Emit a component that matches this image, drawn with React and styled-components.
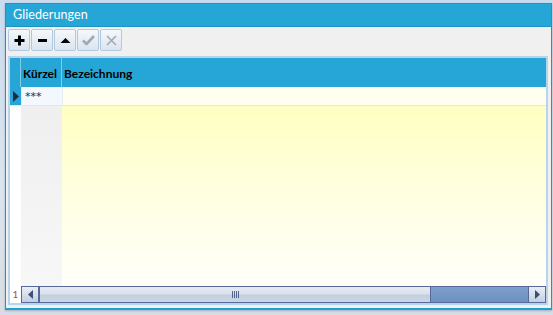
import styled, { createGlobalStyle } from "styled-components";

const GlobalStyle = createGlobalStyle`
  html, body {
    margin: 0;
    padding: 0;
    background: linear-gradient(180deg, #c9dbee 0%, #dbe5ef 60%, #d9dde3 100%);
    font-family: Lato, "Noto Sans", "DejaVu Sans", sans-serif;
  }
  #root {
    width: 553px;
    height: 315px;
    padding: 3px 2px 0 5px;
    box-sizing: border-box;
  }
`;

const Window = styled.div`
  width: 547px;
  height: 307px;
  box-sizing: border-box;
  border: 1px solid #1b97c7;
  border-bottom: 2px solid #1ea0d0;
  background: #f0f0f0;
  display: flex;
  flex-direction: column;
  box-shadow: 0 1px 2px rgba(60, 90, 120, 0.35);
`;

const TitleBar = styled.div`
  height: 22px;
  flex: none;
  background: #26a6d6;
  border-bottom: 1px solid #1c94c4;
  color: #fff;
  font-size: 12.5px;
  line-height: 22px;
  padding-left: 7px;
  letter-spacing: 0.1px;
`;

const Toolbar = styled.div`
  height: 29px;
  flex: none;
  display: flex;
  gap: 1px;
  padding: 2px 0 0 2px;
  box-sizing: border-box;
`;

const ToolButton = styled.button`
  width: 22px;
  height: 22px;
  padding: 0;
  margin: 0;
  border: 1px solid #b4c8de;
  border-radius: 2px;
  background: linear-gradient(180deg, #f6f9fc 0%, #e7eef6 50%, #dbe5f0 100%);
  display: flex;
  align-items: center;
  justify-content: center;
  color: ${(p) => (p.$disabled ? "#a4a9ae" : "#000")};
`;

const Grid = styled.div`
  flex: 1;
  margin: 0 3px 3px 2px;
  border: 2px solid #b6d4ec;
  display: flex;
  flex-direction: column;
  background: #fff;
`;

const HeaderRow = styled.div`
  height: 29px;
  flex: none;
  display: flex;
  background: #26a6d6;
`;

const HeaderCell = styled.div`
  width: ${(p) => p.$w || "auto"};
  flex: ${(p) => (p.$w ? "none" : 1)};
  border-right: ${(p) => (p.$w ? "1px solid #7fcbe8" : "none")};
  font-size: 12px;
  font-weight: 700;
  color: #000;
  display: flex;
  align-items: center;
  padding: 2px 0 0 2px;
  box-sizing: border-box;
`;

const DataRow = styled.div`
  height: 19px;
  flex: none;
  display: flex;
  border-bottom: 1px solid #dce8f3;
  box-sizing: border-box;
`;

const IndicatorCell = styled.div`
  width: 11px;
  flex: none;
  background: ${(p) => (p.$active ? "#26a6d6" : "#fff")};
  display: flex;
  align-items: center;
  justify-content: center;
  border-right: 1px solid #e2ecf5;
`;

const Cell = styled.div`
  width: ${(p) => p.$w || "auto"};
  flex: ${(p) => (p.$w ? "none" : 1)};
  background: ${(p) => p.$bg};
  border-right: ${(p) => (p.$w ? "1px solid #e2ecf5" : "none")};
  font-family: "DejaVu Sans", sans-serif;
  font-size: 11px;
  line-height: 20px;
  padding-left: 3px;
  box-sizing: border-box;
  color: #1c2a55;
`;

const EmptyArea = styled.div`
  flex: 1;
  display: flex;
`;

const EmptyColumn = styled.div`
  width: ${(p) => p.$w || "auto"};
  flex: ${(p) => (p.$w ? "none" : 1)};
  background: ${(p) => p.$bg};
`;

const FooterRow = styled.div`
  height: 17px;
  flex: none;
  display: flex;
`;

const CountCell = styled.div`
  width: 11px;
  font-size: 10px;
  line-height: 17px;
  color: #b05a10;
  text-align: center;
  background: #fff;
`;

const ScrollBar = styled.div`
  flex: 1;
  display: flex;
  background: linear-gradient(180deg, #7d9fcb 0%, #6d91c0 100%);
  border-top: 1px solid #56699a;
  border-bottom: 1px solid #56699a;
`;

const ArrowButton = styled.div`
  width: 16px;
  flex: none;
  border-left: 1px solid #56699a;
  border-right: 1px solid #56699a;
  background: linear-gradient(180deg, #e9eef5 0%, #d6dfea 50%, #c4d0df 100%);
  display: flex;
  align-items: center;
  justify-content: center;
`;

const Thumb = styled.div`
  width: 390px;
  flex: none;
  border-right: 1px solid #56699a;
  border-left: 1px solid #56699a;
  background: linear-gradient(180deg, #e6ebf2 0%, #dae2ec 45%, #c3cfde 55%, #ccd6e3 100%);
  display: flex;
  align-items: center;
  justify-content: center;
  gap: 1px;
`;

const Grip = styled.span`
  width: 1px;
  height: 7px;
  background: #52638c;
`;

const Track = styled.div`
  flex: 1;
`;

const PlusIcon = () => (
  <svg width="11" height="11" viewBox="0 0 11 11">
    <rect x="4" y="0.5" width="3" height="10" fill="currentColor" />
    <rect x="0.5" y="4" width="10" height="3" fill="currentColor" />
  </svg>
);

const MinusIcon = () => (
  <svg width="11" height="11" viewBox="0 0 11 11">
    <rect x="1" y="4" width="9" height="3" fill="currentColor" />
  </svg>
);

const UpIcon = () => (
  <svg width="11" height="11" viewBox="0 0 11 11">
    <path d="M0.5 8 L5.5 3 L10.5 8 Z" fill="currentColor" />
  </svg>
);

const CheckIcon = () => (
  <svg width="13" height="12" viewBox="0 0 13 12">
    <path
      d="M1 6.5 L4.5 10 L12 2"
      fill="none"
      stroke="currentColor"
      strokeWidth="2.6"
      strokeLinejoin="round"
    />
  </svg>
);

const CrossIcon = () => (
  <svg width="11" height="11" viewBox="0 0 11 11">
    <path
      d="M1 1 L10 10 M10 1 L1 10"
      stroke="currentColor"
      strokeWidth="1.6"
    />
  </svg>
);

const RowPointer = () => (
  <svg width="6" height="11" viewBox="0 0 6 11">
    <path d="M0 0 L6 5.5 L0 11 Z" fill="#1f2b4a" />
  </svg>
);

const ArrowLeft = () => (
  <svg width="5" height="9" viewBox="0 0 5 9">
    <path d="M5 0 L0 4.5 L5 9 Z" fill="#3e4c78" />
  </svg>
);

const ArrowRight = () => (
  <svg width="5" height="9" viewBox="0 0 5 9">
    <path d="M0 0 L5 4.5 L0 9 Z" fill="#3e4c78" />
  </svg>
);

const tools = [
  { icon: <PlusIcon />, disabled: false },
  { icon: <MinusIcon />, disabled: false },
  { icon: <UpIcon />, disabled: false },
  { icon: <CheckIcon />, disabled: true },
  { icon: <CrossIcon />, disabled: true },
];

export default function App() {
  return (
    <>
      <GlobalStyle />
      <Window>
        <TitleBar>Gliederungen</TitleBar>
        <Toolbar>
          {tools.map((t, i) => (
            <ToolButton key={i} $disabled={t.disabled}>
              {t.icon}
            </ToolButton>
          ))}
        </Toolbar>
        <Grid>
          <HeaderRow>
            <HeaderCell $w="11px" />
            <HeaderCell $w="41px">Kürzel</HeaderCell>
            <HeaderCell>Bezeichnung</HeaderCell>
          </HeaderRow>
          <DataRow>
            <IndicatorCell $active>
              <RowPointer />
            </IndicatorCell>
            <Cell $w="41px" $bg="#f3f8fe">
              ***
            </Cell>
            <Cell $bg="#fffff0" />
          </DataRow>
          <EmptyArea>
            <EmptyColumn $w="11px" $bg="#fff" />
            <EmptyColumn
              $w="41px"
              $bg="linear-gradient(180deg, #efefef 0%, #f7f7f7 100%)"
            />
            <EmptyColumn $bg="linear-gradient(180deg, #ffffc2 0%, #ffffe2 50%, #fffffb 100%)" />
          </EmptyArea>
          <FooterRow>
            <CountCell>1</CountCell>
            <ScrollBar>
              <ArrowButton>
                <ArrowLeft />
              </ArrowButton>
              <Thumb>
                <Grip />
                <Grip />
                <Grip />
                <Grip />
              </Thumb>
              <Track />
              <ArrowButton>
                <ArrowRight />
              </ArrowButton>
            </ScrollBar>
          </FooterRow>
        </Grid>
      </Window>
    </>
  );
}
